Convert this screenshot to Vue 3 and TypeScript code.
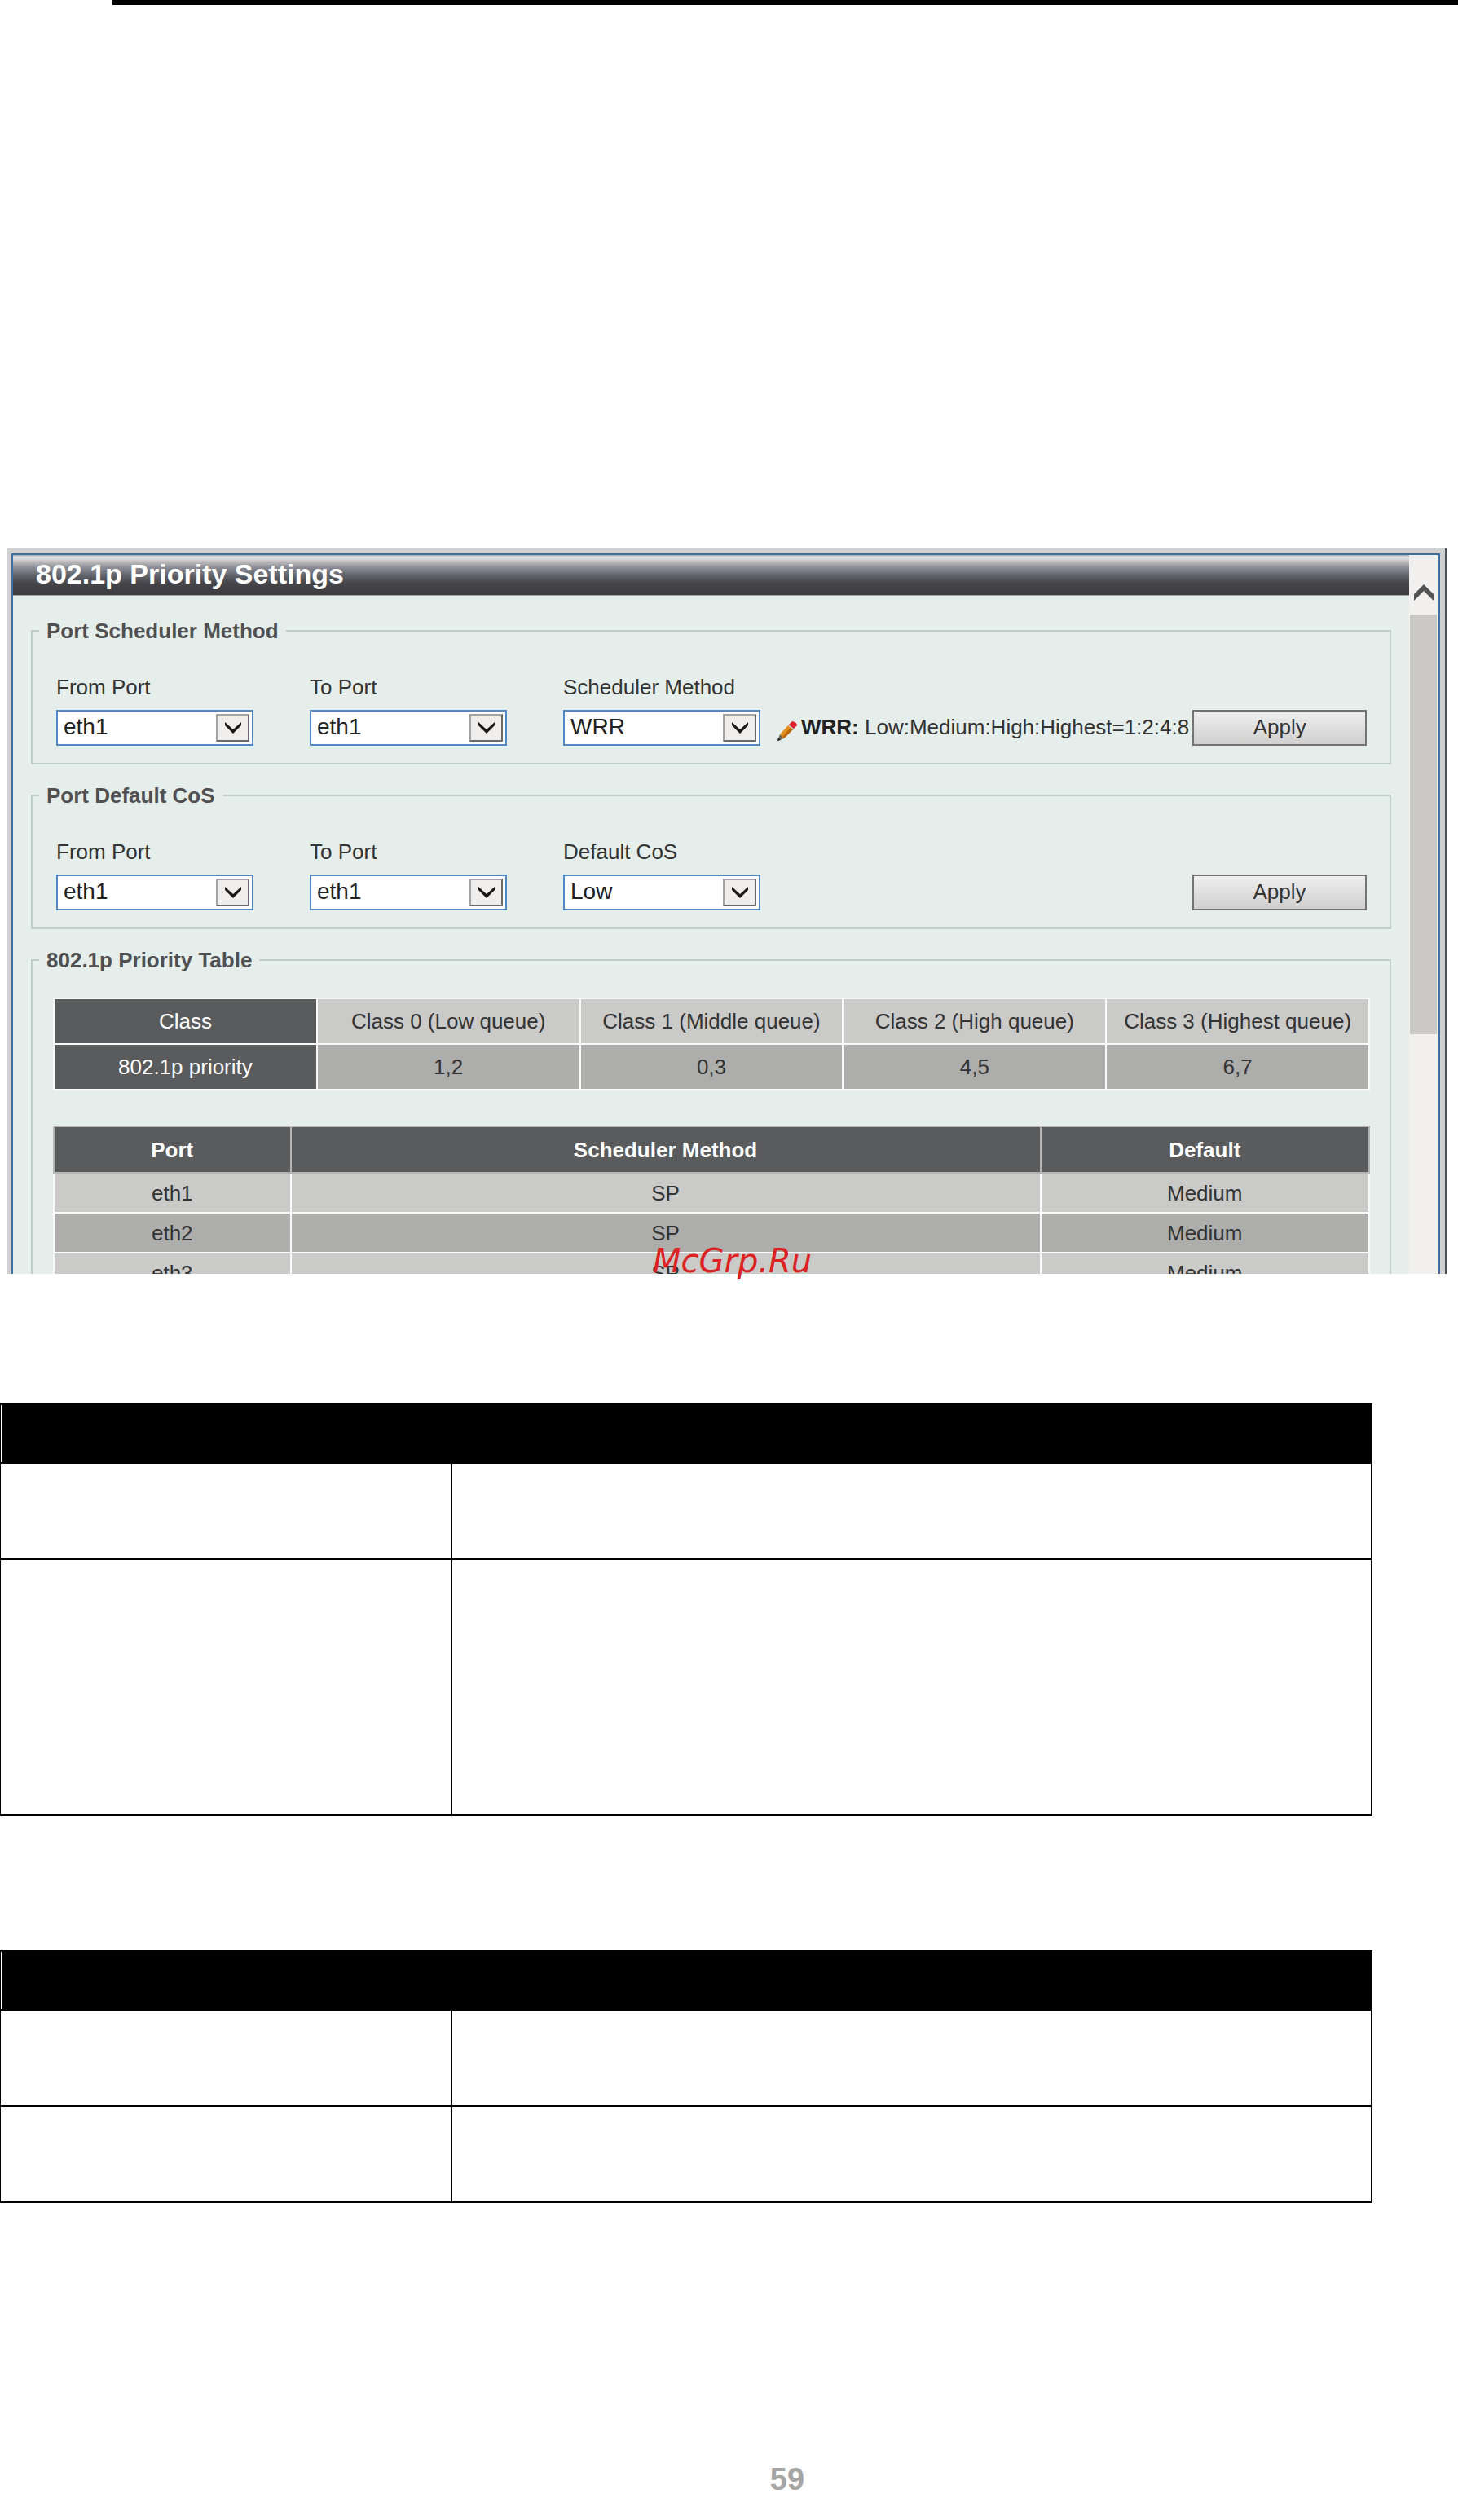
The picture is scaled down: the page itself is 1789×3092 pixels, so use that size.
<script setup lang="ts">
import { ref } from 'vue'

interface SelectField {
  id: string
  label: string
  options: string[]
  value: string
}

interface SettingsGroup {
  title: string
  fields: SelectField[]
  note?: { name: string; text: string }
}

const groups = ref<SettingsGroup[]>([
  {
    title: 'Port Scheduler Method',
    fields: [
      { id: 'sched-from', label: 'From Port', options: ['eth1', 'eth2', 'eth3'], value: 'eth1' },
      { id: 'sched-to', label: 'To Port', options: ['eth1', 'eth2', 'eth3'], value: 'eth1' },
      { id: 'sched-method', label: 'Scheduler Method', options: ['WRR', 'SP'], value: 'WRR' },
    ],
    note: { name: 'WRR:', text: 'Low:Medium:High:Highest=1:2:4:8' },
  },
  {
    title: 'Port Default CoS',
    fields: [
      { id: 'cos-from', label: 'From Port', options: ['eth1', 'eth2', 'eth3'], value: 'eth1' },
      { id: 'cos-to', label: 'To Port', options: ['eth1', 'eth2', 'eth3'], value: 'eth1' },
      { id: 'cos-default', label: 'Default CoS', options: ['Low', 'Medium', 'High', 'Highest'], value: 'Low' },
    ],
  },
])

const classes = [
  { name: 'Class 0 (Low queue)', priority: '1,2' },
  { name: 'Class 1 (Middle queue)', priority: '0,3' },
  { name: 'Class 2 (High queue)', priority: '4,5' },
  { name: 'Class 3 (Highest queue)', priority: '6,7' },
]

const ports = [
  { port: 'eth1', method: 'SP', cos: 'Medium' },
  { port: 'eth2', method: 'SP', cos: 'Medium' },
  { port: 'eth3', method: 'SP', cos: 'Medium' },
]
</script>

<template>
  <main class="page">
    <hr class="rule" />

    <section class="shot">
      <div class="window">
        <div class="pane">
          <h1 class="title">802.1p Priority Settings</h1>
          <div class="body">
            <fieldset v-for="group in groups" :key="group.title" class="group">
              <legend>{{ group.title }}</legend>
              <div class="form-row">
                <div v-for="field in group.fields" :key="field.id" class="field">
                  <label :for="field.id">{{ field.label }}</label>
                  <div class="select">
                    <select :id="field.id" v-model="field.value">
                      <option v-for="o in field.options" :key="o">{{ o }}</option>
                    </select>
                    <span class="arrow">
                      <svg width="22" height="14" viewBox="0 0 22 14" aria-hidden="true">
                        <path d="M1 0 L11 9 L21 0 V4 L11 14 L1 4 Z" fill="#1c1818" />
                      </svg>
                    </span>
                  </div>
                </div>
                <div class="actions">
                  <p v-if="group.note" class="note">
                    <svg class="pencil" width="26" height="26" viewBox="0 0 26 26" aria-hidden="true">
                      <path d="M1 25 L4 17 L9 22 Z" fill="#6b6350" />
                      <path d="M1 25 L2 21 L5 24 Z" fill="#222" />
                      <path d="M4 17 L14 6 L20 11 L9 22 Z" fill="#e8901c" />
                      <path d="M7 20 L17 9 L20 11 L9 22 Z" fill="#b9660f" />
                      <path d="M14 6 L16 4 L22 9 L20 11 Z" fill="#c9c4c4" />
                      <path d="M15 5 L19 1 Q25 2 25 6 L21 10 Z" fill="#e01f2c" />
                    </svg>
                    <span><b>{{ group.note.name }}</b> {{ group.note.text }}</span>
                  </p>
                  <button type="button" class="apply">Apply</button>
                </div>
              </div>
            </fieldset>

            <fieldset class="group">
              <legend>802.1p Priority Table</legend>
              <div class="tables">
                <table class="grid">
                  <tbody>
                    <tr>
                      <th scope="row">Class</th>
                      <td v-for="c in classes" :key="c.name">{{ c.name }}</td>
                    </tr>
                    <tr>
                      <th scope="row">802.1p priority</th>
                      <td v-for="c in classes" :key="c.name">{{ c.priority }}</td>
                    </tr>
                  </tbody>
                </table>

                <table class="grid ports">
                  <colgroup>
                    <col class="col-port" />
                    <col />
                    <col class="col-default" />
                  </colgroup>
                  <thead>
                    <tr>
                      <th scope="col">Port</th>
                      <th scope="col">Scheduler Method</th>
                      <th scope="col">Default</th>
                    </tr>
                  </thead>
                  <tbody>
                    <tr v-for="p in ports" :key="p.port">
                      <td>{{ p.port }}</td>
                      <td>{{ p.method }}</td>
                      <td>{{ p.cos }}</td>
                    </tr>
                  </tbody>
                </table>
              </div>
            </fieldset>
          </div>
        </div>

        <div class="scrollbar">
          <svg width="24" height="20" viewBox="0 0 24 20" aria-hidden="true">
            <path d="M0 12 L12 0 L24 12 V20 L12 8 L0 20 Z" fill="#505254" />
          </svg>
          <div class="thumb"></div>
        </div>
      </div>
      <span class="watermark">McGrp.Ru</span>
    </section>

    <table class="doc doc-first">
      <colgroup><col class="doc-name" /><col /></colgroup>
      <thead>
        <tr><th colspan="2"></th></tr>
      </thead>
      <tbody>
        <tr><td></td><td></td></tr>
        <tr class="tall"><td></td><td></td></tr>
      </tbody>
    </table>

    <table class="doc">
      <colgroup><col class="doc-name" /><col /></colgroup>
      <thead>
        <tr><th colspan="2"></th></tr>
      </thead>
      <tbody>
        <tr><td></td><td></td></tr>
        <tr><td></td><td></td></tr>
      </tbody>
    </table>

    <footer class="page-number">59</footer>
  </main>
</template>

<style>
body {
  margin: 0;
  background: #fff;
}
</style>

<style scoped>
.page {
  overflow: hidden;
  font-family: 'Liberation Sans', Arial, sans-serif;
  font-size: 26px;
  line-height: 30px;
  color: #333;
}

.page * {
  box-sizing: border-box;
}

.rule {
  height: 6px;
  margin: 0 0 0 138px;
  border: 0;
  background: #000;
}

.shot {
  position: relative;
  margin: 667px 14px 0 8px;
}

.window {
  display: flex;
  height: 890px;
  overflow: hidden;
  padding: 6px 6px 0;
  border-right: 2px solid #4a5058;
  background: #d1d1d1;
}

.pane {
  flex: 1;
  min-width: 0;
  border: solid #3f6da6;
  border-width: 2px 0 0 2px;
  background: #e5eeea;
}

.title {
  height: 50px;
  margin: 0;
  padding-left: 28px;
  border-bottom: 1px solid #a5a8a8;
  background: linear-gradient(#a9a9ad 0, #e4e4e4 3px, #b8b8ba 9px, #8d8e98 15px, #5d6067 26px, #454549 35px, #3c3b3f 49px);
  color: #fff;
  font-size: 34px;
  line-height: 46px;
}

.body {
  padding: 28px 22px 0;
}

.group {
  min-width: 0;
  margin: 0 0 23px;
  padding: 0 8px;
  border: 2px solid #bfcecd;
}

.group legend {
  padding: 0 9px;
  color: #505052;
  font-weight: bold;
}

.form-row {
  display: flex;
  align-items: flex-end;
  gap: 20px;
  padding: 39px 20px 21px 21px;
}

.field {
  flex: 0 0 242px;
  margin-right: 49px;
}

.field:nth-child(3) {
  margin-right: 0;
}

.field label {
  display: block;
  margin-bottom: 13px;
}

.select {
  display: grid;
  align-items: center;
}

.select > * {
  grid-area: 1 / 1;
}

.select select {
  width: 100%;
  height: 44px;
  padding: 0 48px 4px 7px;
  border: 2px solid #5488c4;
  border-radius: 0;
  background: #fff;
  color: #222;
  font: 28px 'Liberation Sans', Arial, sans-serif;
  appearance: none;
}

.arrow {
  display: flex;
  align-items: center;
  justify-content: center;
  justify-self: end;
  width: 41px;
  height: 34px;
  margin-right: 5px;
  border: 2px solid;
  border-color: #a3a3a3 #6a6a6a #6a6a6a #a3a3a3;
  background: #f0eeed;
  pointer-events: none;
}

.actions {
  display: flex;
  flex: 1;
  justify-content: flex-end;
  gap: 4px;
}

.note {
  display: flex;
  align-items: flex-start;
  gap: 4px;
  margin: 0;
  line-height: 42px;
  white-space: nowrap;
}

.note b {
  color: #222;
}

.pencil {
  flex: none;
  margin-top: 13px;
}

.apply {
  width: 214px;
  height: 44px;
  padding: 0 0 2px;
  border: 2px solid #747474;
  border-radius: 0;
  background: linear-gradient(#efefef, #d0cfce);
  color: #333;
  font: 26px 'Liberation Sans', Arial, sans-serif;
}

.tables {
  padding: 31px 16px 0 17px;
}

.grid {
  width: 100%;
  border-collapse: collapse;
  table-layout: fixed;
  text-align: center;
}

.grid th,
.grid td {
  height: 56px;
  padding: 0;
  border: 2px solid #f8faf9;
}

.grid th {
  background: #5a5b5d;
  color: #fff;
  font-weight: normal;
}

.grid td {
  background: #cacac8;
}

.grid tr:nth-child(even) td {
  background: #adadab;
}

.ports {
  margin-top: 43px;
}

.col-port {
  width: 18%;
}

.col-default {
  width: 25%;
}

.ports th {
  height: 57px;
  border-color: #b4b4b4;
  font-weight: bold;
}

.ports td {
  height: 49px;
}

.scrollbar {
  flex: none;
  width: 38px;
  padding: 36px 2px 0 1px;
  border: solid #3f6da6;
  border-width: 2px 2px 0 0;
  background: #f1f0ef;
}

.scrollbar svg {
  display: block;
  margin: 0 auto 17px;
}

.thumb {
  height: 515px;
  background: #cac9c8;
}

.watermark {
  position: absolute;
  top: 851px;
  left: 793px;
  color: #dc2222;
  font: italic 40px/46px 'DejaVu Sans', sans-serif;
}

.doc {
  width: calc(100% - 104px);
  margin: 165px 0 0 -1px;
  border-collapse: collapse;
  table-layout: fixed;
}

.doc-first {
  margin-top: 159px;
}

.doc-name {
  width: 554px;
}

.doc th,
.doc td {
  height: 118px;
  padding: 0;
  border: 2px solid #000;
}

.doc th {
  height: 72px;
  background: #000;
  box-shadow: inset 1px 0 #fff;
}

.doc .tall td {
  height: 314px;
}

.page-number {
  margin: 317px 0 0 143px;
  color: #a5a5a4;
  font-size: 38px;
  font-weight: bold;
  line-height: 44px;
  text-align: center;
}
</style>
